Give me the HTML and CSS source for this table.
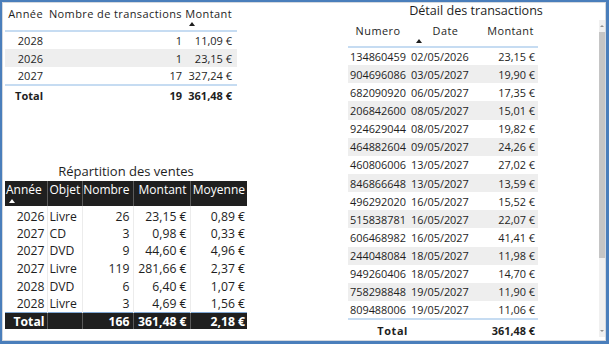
FILE: index.html
```html
<!DOCTYPE html>
<html lang="fr">
<head>
<meta charset="utf-8">
<link rel="stylesheet" href="styles.css">
</head>
<body>
<div class="frame">
  <div class="left">
    <table class="t1">
      <colgroup><col class="c1a"><col class="c1b"><col class="c1c"></colgroup>
      <thead>
        <tr><th class="p1a">Année</th><th class="p1b">Nombre de transactions</th><th class="p1c">Montant<span class="sort"></span></th></tr>
      </thead>
      <tbody>
        <tr><td class="p1a">2028</td><td class="p1b">1</td><td class="p1c">11,09 €</td></tr>
        <tr class="alt"><td class="p1a">2026</td><td class="p1b">1</td><td class="p1c">23,15 €</td></tr>
        <tr><td class="p1a">2027</td><td class="p1b">17</td><td class="p1c">327,24 €</td></tr>
      </tbody>
      <tfoot>
        <tr><td class="p1a">Total</td><td class="p1b">19</td><td class="p1c">361,48 €</td></tr>
      </tfoot>
    </table>

    <div class="rep">
      <div class="title">Répartition des ventes</div>
      <table class="t2">
        <colgroup><col class="c2a"><col class="c2b"><col class="c2c"><col class="c2d"><col class="c2e"></colgroup>
        <thead>
          <tr><th class="p2a">Année<span class="sort white"></span></th><th class="p2b">Objet</th><th class="p2c">Nombre</th><th class="p2d">Montant</th><th class="p2e">Moyenne</th></tr>
        </thead>
        <tbody>
          <tr><td class="p2a">2026</td><td class="p2b">Livre</td><td class="p2c">26</td><td class="p2d">23,15 €</td><td class="p2e">0,89 €</td></tr>
          <tr><td class="p2a">2027</td><td class="p2b">CD</td><td class="p2c">3</td><td class="p2d">0,98 €</td><td class="p2e">0,33 €</td></tr>
          <tr><td class="p2a">2027</td><td class="p2b">DVD</td><td class="p2c">9</td><td class="p2d">44,60 €</td><td class="p2e">4,96 €</td></tr>
          <tr><td class="p2a">2027</td><td class="p2b">Livre</td><td class="p2c">119</td><td class="p2d">281,66 €</td><td class="p2e">2,37 €</td></tr>
          <tr><td class="p2a">2028</td><td class="p2b">DVD</td><td class="p2c">6</td><td class="p2d">6,40 €</td><td class="p2e">1,07 €</td></tr>
          <tr><td class="p2a">2028</td><td class="p2b">Livre</td><td class="p2c">3</td><td class="p2d">4,69 €</td><td class="p2e">1,56 €</td></tr>
        </tbody>
        <tfoot>
          <tr><td class="p2a">Total</td><td class="p2b"></td><td class="p2c">166</td><td class="p2d">361,48 €</td><td class="p2e">2,18 €</td></tr>
        </tfoot>
      </table>
    </div>
  </div>

  <div class="right">
    <div class="title">Détail des transactions</div>
    <div class="rbody">
      <table class="t3">
        <colgroup><col class="c3a"><col class="c3b"><col class="c3c"></colgroup>
        <thead>
          <tr><th>Numero</th><th>Date<span class="sort"></span></th><th>Montant</th></tr>
        </thead>
        <tbody>
          <tr><td class="p3a">134860459</td><td class="p3b">02/05/2026</td><td class="p3c">23,15 €</td></tr>
          <tr class="alt"><td class="p3a">904696086</td><td class="p3b">03/05/2027</td><td class="p3c">19,90 €</td></tr>
          <tr><td class="p3a">682090920</td><td class="p3b">06/05/2027</td><td class="p3c">17,35 €</td></tr>
          <tr class="alt"><td class="p3a">206842600</td><td class="p3b">08/05/2027</td><td class="p3c">15,01 €</td></tr>
          <tr><td class="p3a">924629044</td><td class="p3b">08/05/2027</td><td class="p3c">19,82 €</td></tr>
          <tr class="alt"><td class="p3a">464882604</td><td class="p3b">09/05/2027</td><td class="p3c">24,26 €</td></tr>
          <tr><td class="p3a">460806006</td><td class="p3b">13/05/2027</td><td class="p3c">27,02 €</td></tr>
          <tr class="alt"><td class="p3a">846866648</td><td class="p3b">13/05/2027</td><td class="p3c">13,59 €</td></tr>
          <tr><td class="p3a">496292020</td><td class="p3b">16/05/2027</td><td class="p3c">15,52 €</td></tr>
          <tr class="alt"><td class="p3a">515838781</td><td class="p3b">16/05/2027</td><td class="p3c">22,07 €</td></tr>
          <tr><td class="p3a">606468982</td><td class="p3b">16/05/2027</td><td class="p3c">41,41 €</td></tr>
          <tr class="alt"><td class="p3a">244048084</td><td class="p3b">18/05/2027</td><td class="p3c">11,98 €</td></tr>
          <tr><td class="p3a">949260406</td><td class="p3b">18/05/2027</td><td class="p3c">14,70 €</td></tr>
          <tr class="alt"><td class="p3a">758298848</td><td class="p3b">19/05/2027</td><td class="p3c">11,90 €</td></tr>
          <tr><td class="p3a">809488006</td><td class="p3b">19/05/2027</td><td class="p3c">11,06 €</td></tr>
        </tbody>
        <tfoot>
          <tr><td class="p3a">Total</td><td class="p3b"></td><td class="p3c">361,48 €</td></tr>
        </tfoot>
      </table>
      <div class="scroll">
        <span class="arrow up"></span>
        <span class="track"><span class="thumb"></span></span>
        <span class="arrow down"></span>
      </div>
    </div>
  </div>
</div>
</body>
</html>
```

FILE: styles.css
```css
* { box-sizing: border-box; }
html, body { margin: 0; padding: 0; background: #ffffff; }
body { font-family: "Open Sans", "Noto Sans", sans-serif; color: #1e1e1e; }

.frame {
  width: 609px;
  height: 344px;
  border-style: solid;
  border-color: #4a7ebb;
  border-width: 2px 3px 3px 2px;
  box-shadow: inset 0 0 0 1px #d4d8de;
  display: flex;
  overflow: hidden;
}

table { border-collapse: collapse; table-layout: fixed; }
th, td { padding: 0; white-space: nowrap; overflow: visible; }
th { font-weight: normal; vertical-align: top; }

/* ---------- top-left table ---------- */
.left { width: 344px; padding: 2px 0 0 3px; display: flex; flex-direction: column; }
.t1 { width: 232px; font-size: 11px; }
.c1a { width: 41px; } .c1b { width: 138px; } .c1c { width: 53px; }
.t1 th { height: 27px; padding-top: 2px; text-align: right; letter-spacing: 0.4px; }
.t1 thead tr { border-bottom: 2px solid #c6dcf2; }
.t1 td { height: 18px; text-align: right; }
.t1 .alt td { background: #eeeeee; }
.t1 tfoot tr { border-top: 2px solid #c6dcf2; }
.t1 tfoot td { height: 20px; font-weight: bold; }
.p1a { padding-right: 3px !important; }
.p1b { padding-right: 2px !important; }
.p1c { padding-right: 5px !important; }

.sort {
  display: block;
  width: 0; height: 0;
  border-left: 3px solid transparent;
  border-right: 3px solid transparent;
  border-bottom: 4px solid #1e1e1e;
  margin-top: 1px;
}
.t1 .sort { margin-left: 5px; }
.sort.white { border-bottom-color: #ffffff; margin-left: 3px; margin-top: 0; }

/* ---------- bottom-left table ---------- */
.rep { margin-top: 58px; display: flex; flex-direction: column; align-items: flex-start; }
.rep .title { width: 242px; text-align: center; font-size: 13px; line-height: 17px; margin-bottom: 1px; }
.t2 { width: 242px; font-size: 12.2px; }
.c2a { width: 42px; } .c2b { width: 35px; } .c2c { width: 51px; } .c2d { width: 57px; } .c2e { width: 57px; }
.t2 thead th {
  background: #1f1f1f; color: #ffffff; height: 25px; line-height: 18px; font-size: 12px;
  text-align: right; border-left: 1px solid #5a5a5a;
}
.t2 thead th:first-child { border-left: none; text-align: left; padding-left: 1px; }
.t2 td { height: 17.6px; line-height: 16px; text-align: right; border-left: 1px solid #ececec; }
.t2 td:first-child { border-left: none; }
.t2 .p2b { text-align: left; padding-left: 2px; }
.t2 .p2a { padding-right: 2px; }
.t2 .p2c { padding-right: 3px; }
.t2 .p2d { padding-right: 3px; }
.t2 .p2e { padding-right: 2px; }
.t2 tbody tr:first-child td { padding-top: 2px; height: 19px; }
.t2 tfoot tr { border-top: 1px solid #7fa7d4; }
.t2 tfoot td { background: #1f1f1f; color: #ffffff; font-weight: bold; height: 16px; line-height: 15px; border-left: 1px solid #5a5a5a; }
.t2 tfoot td:first-child { border-left: none; padding-right: 2px; }

/* ---------- right table ---------- */
.right { flex: 1; display: flex; flex-direction: column; }
.right .title { text-align: center; font-size: 12.6px; line-height: 18px; padding-top: 0; }
.rbody { display: flex; flex: 1; padding-left: 2px; }
.t3 { width: 190px; font-size: 10.9px; align-self: flex-start; }
.c3a { width: 60px; } .c3b { width: 75px; } .c3c { width: 55px; }
.t3 th { height: 27px; text-align: center; padding-top: 3px; letter-spacing: 0.45px; }
.t3 th .sort { margin: 1px auto 0 8px; }
.t3 thead tr { border-bottom: 2px solid #c6dcf2; }
.t3 td { height: 18.15px; }
.t3 .alt td { background: #eeeeee; }
.p3a { text-align: right; padding-right: 2px; }
.p3b { text-align: left; padding-left: 3px; }
.p3c { text-align: right; padding-right: 3px; }
.t3 tfoot tr { border-top: 2px solid #c6dcf2; }
.t3 tfoot td { height: 22px; font-weight: bold; }
.t3 tfoot .p3a { padding-right: 0; letter-spacing: 0.6px; }

.scroll {
  margin-left: auto; margin-right: 1px; margin-top: 0px; margin-bottom: 4px;
  width: 6px; display: flex; flex-direction: column; background: #f0f0f0;
}
.arrow { height: 12px; display: flex; justify-content: center; align-items: center; }
.arrow::before { content: ""; width: 0; height: 0; border-left: 2px solid transparent; border-right: 2px solid transparent; }
.up::before { border-bottom: 2px solid #909090; }
.down::before { border-top: 2px solid #909090; }
.track { flex: 1; display: flex; flex-direction: column; }
.thumb { display: block; height: 226px; background: #c5c5c5; }
```
